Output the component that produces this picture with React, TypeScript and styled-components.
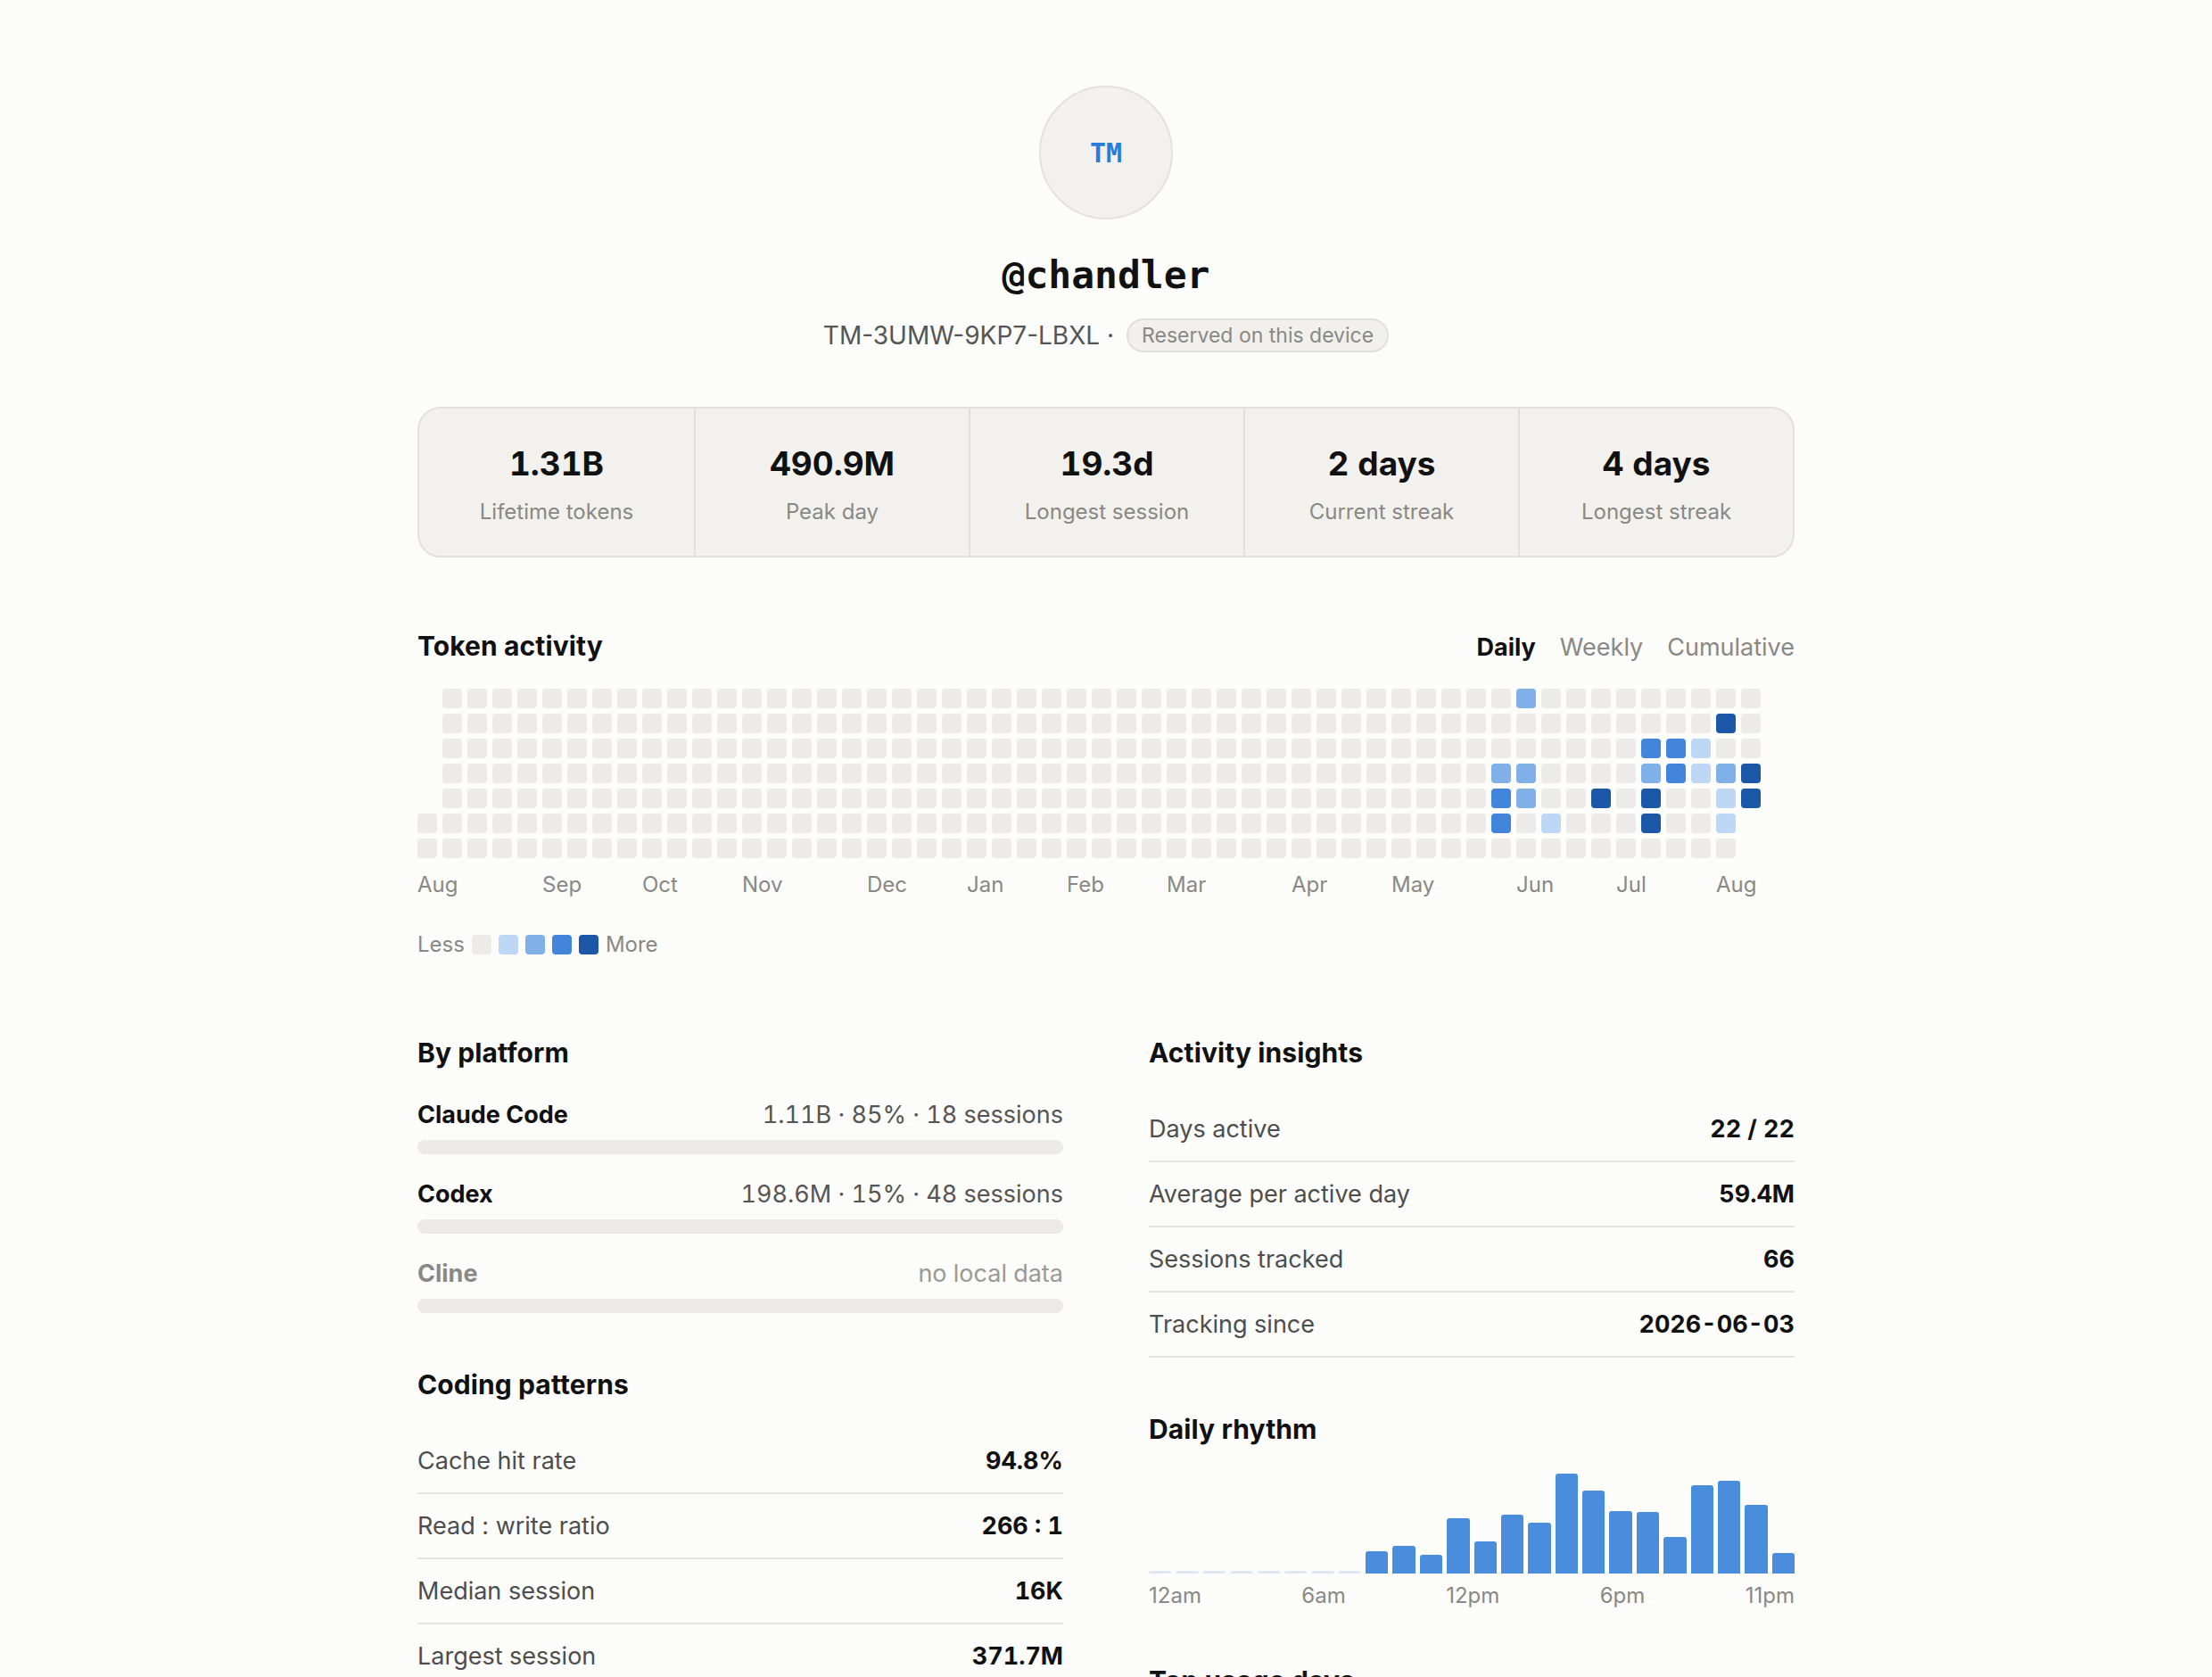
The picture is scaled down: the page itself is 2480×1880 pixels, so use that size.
import * as React from 'react';
import styled, { createGlobalStyle } from 'styled-components';

const GlobalStyle = createGlobalStyle`
  html, body {
    margin: 0;
    padding: 0;
    background: #fcfcfb;
  }
  body {
    font-family: Inter, "Noto Sans", "Liberation Sans", sans-serif;
    color: #111;
    -webkit-font-smoothing: antialiased;
  }
  * {
    box-sizing: border-box;
  }
`;

const LEVELS = ['#ecebe7', '#bdd7f4', '#80b0e8', '#4285db', '#1c58a7'];

// active cells, keyed by "column,row"
const ACTIVE: Record<string, number> = {
  '44,0': 2,
  '52,1': 4,
  '49,2': 3,
  '50,2': 3,
  '51,2': 1,
  '43,3': 2,
  '44,3': 2,
  '49,3': 2,
  '50,3': 3,
  '51,3': 1,
  '52,3': 2,
  '53,3': 4,
  '43,4': 3,
  '44,4': 2,
  '47,4': 4,
  '49,4': 4,
  '52,4': 1,
  '53,4': 4,
  '43,5': 3,
  '45,5': 1,
  '49,5': 4,
  '52,5': 1,
};

const MONTHS = [
  { name: 'Aug', col: 0 },
  { name: 'Sep', col: 5 },
  { name: 'Oct', col: 9 },
  { name: 'Nov', col: 13 },
  { name: 'Dec', col: 18 },
  { name: 'Jan', col: 22 },
  { name: 'Feb', col: 26 },
  { name: 'Mar', col: 30 },
  { name: 'Apr', col: 35 },
  { name: 'May', col: 39 },
  { name: 'Jun', col: 44 },
  { name: 'Jul', col: 48 },
  { name: 'Aug', col: 52 },
];

const HOURS = [0, 0, 0, 0, 0, 0, 0, 0, 25, 31, 21, 62, 36, 66, 57, 112, 93, 70, 69, 41, 99, 104, 77, 23];

const STATS = [
  { value: '1.31B', label: 'Lifetime tokens' },
  { value: '490.9M', label: 'Peak day' },
  { value: '19.3d', label: 'Longest session' },
  { value: '2 days', label: 'Current streak' },
  { value: '4 days', label: 'Longest streak' },
];

const PLATFORMS = [
  { name: 'Claude Code', meta: '1.11B · 85% · 18 sessions' },
  { name: 'Codex', meta: '198.6M · 15% · 48 sessions' },
  { name: 'Cline', meta: 'no local data', muted: true },
];

const INSIGHTS = [
  { label: 'Days active', value: '22 / 22' },
  { label: 'Average per active day', value: '59.4M' },
  { label: 'Sessions tracked', value: '66' },
  { label: 'Tracking since', value: '2026-06-03' },
];

const PATTERNS = [
  { label: 'Cache hit rate', value: '94.8%' },
  { label: 'Read : write ratio', value: '266 : 1' },
  { label: 'Median session', value: '16K' },
  { label: 'Largest session', value: '371.7M' },
];

const Page = styled('main')`
  width: 1544px;
  margin: 0 auto;
  padding: 96px 0 160px;
  display: flex;
  flex-direction: column;
`;

const ProfileHeader = styled('header')`
  display: flex;
  flex-direction: column;
  align-items: center;
`;

const Avatar = styled('div')`
  width: 150px;
  height: 150px;
  border-radius: 50%;
  background: #f2f1ee;
  border: 2px solid #e4e2dd;
  display: flex;
  align-items: center;
  justify-content: center;
  font-family: "DejaVu Sans Mono", "Liberation Mono", monospace;
  font-weight: 700;
  font-size: 30px;
  color: #2b7bdc;
`;

const Handle = styled('h1')`
  margin: 36px 0 0;
  font-family: "DejaVu Sans Mono", "Liberation Mono", monospace;
  font-size: 43px;
  line-height: 52px;
  font-weight: 700;
  color: #111;
`;

const IdRow = styled('div')`
  margin-top: 23px;
  height: 38px;
  display: flex;
  align-items: center;
  gap: 14px;
  font-size: 28px;
  color: #555;
`;

const Pill = styled('span')`
  height: 38px;
  padding: 0 15px;
  border-radius: 19px;
  background: #f1f0ed;
  border: 2px solid #e2e0db;
  color: #8a8884;
  font-size: 23px;
  display: inline-flex;
  align-items: center;
`;

const StatsCard = styled('section')`
  margin-top: 61px;
  display: grid;
  grid-template-columns: repeat(5, 1fr);
  background: #f2f1ee;
  border: 2px solid #e3e1dc;
  border-radius: 26px;
  overflow: hidden;
`;

const Stat = styled('div')`
  padding: 40px 0 34px;
  display: flex;
  flex-direction: column;
  align-items: center;
  gap: 17px;

  & + & {
    border-left: 2px solid #e3e1dc;
  }
`;

const StatValue = styled('div')`
  font-size: 37px;
  line-height: 44px;
  font-weight: 700;
  font-variant-numeric: tabular-nums;
  color: #111;
`;

const StatLabel = styled('div')`
  font-size: 24px;
  line-height: 30px;
  color: #8a8884;
`;

const ActivitySection = styled('section')`
  margin-top: 81px;
`;

const SectionHeader = styled('div')`
  display: flex;
  justify-content: space-between;
  align-items: baseline;
`;

const Title = styled('h2')`
  margin: 0;
  font-size: 30px;
  line-height: 36px;
  font-weight: 700;
  letter-spacing: 0.1px;
  color: #111;
`;

const Tabs = styled('div')`
  display: flex;
  gap: 27px;
`;

const Tab = styled('button')<{ $active?: boolean }>`
  padding: 0;
  border: 0;
  background: none;
  font-family: inherit;
  font-size: 27px;
  line-height: 34px;
  font-weight: ${p => (p.$active ? 700 : 400)};
  color: ${p => (p.$active ? '#111' : '#8a8884')};
  cursor: pointer;
`;

const HeatGrid = styled('div')`
  margin-top: 29px;
  display: grid;
  grid-template-rows: repeat(7, 22px);
  grid-auto-flow: column;
  grid-auto-columns: 22px;
  gap: 6px;
`;

const Cell = styled('div')<{ $level: number; $blank?: boolean }>`
  border-radius: 4px;
  background: ${p => (p.$blank ? 'transparent' : LEVELS[p.$level])};
`;

const MonthRow = styled('div')`
  margin-top: 15px;
  display: grid;
  grid-template-columns: repeat(54, 22px);
  column-gap: 6px;
  font-size: 24px;
  line-height: 30px;
  color: #8a8884;
`;

const Month = styled('span')<{ $col: number }>`
  grid-row: 1;
  grid-column: ${p => p.$col + 1} / span 3;
  white-space: nowrap;
`;

const Legend = styled('div')`
  margin-top: 37px;
  display: flex;
  align-items: center;
  gap: 8px;
  font-size: 24px;
  line-height: 30px;
  color: #8a8884;
`;

const Swatch = styled('span')<{ $level: number }>`
  width: 22px;
  height: 22px;
  border-radius: 4px;
  background: ${p => LEVELS[p.$level]};
`;

const Columns = styled('div')`
  margin-top: 88px;
  display: grid;
  grid-template-columns: 1fr 1fr;
  column-gap: 96px;
  align-items: start;
`;

const Column = styled('div')`
  display: flex;
  flex-direction: column;
  gap: 62px;
`;

const Block = styled('section')`
  display: flex;
  flex-direction: column;
`;

const PlatformList = styled('div')`
  margin-top: 35px;
  display: flex;
  flex-direction: column;
  gap: 28px;
`;

const PlatformRow = styled('div')`
  display: flex;
  flex-direction: column;
  gap: 11px;
`;

const PlatformLine = styled('div')`
  display: flex;
  justify-content: space-between;
  font-size: 27px;
  line-height: 34px;
`;

const PlatformName = styled('span')<{ $muted?: boolean }>`
  font-weight: 700;
  color: ${p => (p.$muted ? '#8a8884' : '#111')};
`;

const PlatformMeta = styled('span')<{ $muted?: boolean }>`
  font-variant-numeric: tabular-nums;
  color: ${p => (p.$muted ? '#9b9994' : '#555')};
`;

const Track = styled('div')`
  height: 16px;
  border-radius: 8px;
  background: #ebeae6;
`;

const InfoList = styled('div')`
  margin-top: 32px;
  display: flex;
  flex-direction: column;
`;

const InfoRow = styled('div')`
  display: flex;
  justify-content: space-between;
  padding: 19px 0 18px;
  border-bottom: 2px solid #e6e4df;
  font-size: 27px;
  line-height: 34px;
`;

const InfoLabel = styled('span')`
  color: #4d4d4d;
`;

const InfoValue = styled('span')`
  font-weight: 700;
  font-variant-numeric: tabular-nums;
  color: #111;
`;

const Chart = styled('div')`
  margin-top: 32px;
  height: 112px;
  display: grid;
  grid-template-columns: repeat(24, 1fr);
  column-gap: 5px;
  align-items: end;
`;

const Bar = styled('div')<{ $empty?: boolean }>`
  background: ${p => (p.$empty ? '#dde7f5' : '#4a8ddc')};
  border-radius: 3px 3px 0 0;
`;

const Axis = styled('div')`
  margin-top: 10px;
  display: flex;
  justify-content: space-between;
  font-size: 24px;
  line-height: 30px;
  color: #8a8884;
`;

const buildCells = () => {
  const cells: { key: string; level: number; blank: boolean }[] = [];
  for (let i = 0; i < 5; i++) cells.push({ key: `b${i}`, level: 0, blank: true });
  for (let i = 5; i < 376; i++) {
    const col = Math.floor(i / 7);
    const row = i % 7;
    cells.push({ key: `d${i}`, level: ACTIVE[`${col},${row}`] || 0, blank: false });
  }
  return cells;
};

const App = () => {
  const cells = buildCells();
  return (
    <>
      <GlobalStyle />
      <Page>
        <ProfileHeader>
          <Avatar>TM</Avatar>
          <Handle>@chandler</Handle>
          <IdRow>
            <span>TM-3UMW-9KP7-LBXL ·</span>
            <Pill>Reserved on this device</Pill>
          </IdRow>
        </ProfileHeader>

        <StatsCard>
          {STATS.map(stat => (
            <Stat key={stat.label}>
              <StatValue>{stat.value}</StatValue>
              <StatLabel>{stat.label}</StatLabel>
            </Stat>
          ))}
        </StatsCard>

        <ActivitySection>
          <SectionHeader>
            <Title>Token activity</Title>
            <Tabs>
              <Tab $active>Daily</Tab>
              <Tab>Weekly</Tab>
              <Tab>Cumulative</Tab>
            </Tabs>
          </SectionHeader>
          <HeatGrid>
            {cells.map(cell => (
              <Cell key={cell.key} $level={cell.level} $blank={cell.blank} />
            ))}
          </HeatGrid>
          <MonthRow>
            {MONTHS.map(month => (
              <Month key={`${month.name}${month.col}`} $col={month.col}>
                {month.name}
              </Month>
            ))}
          </MonthRow>
          <Legend>
            <span>Less</span>
            {[0, 1, 2, 3, 4].map(level => (
              <Swatch key={level} $level={level} />
            ))}
            <span>More</span>
          </Legend>
        </ActivitySection>

        <Columns>
          <Column>
            <Block>
              <Title>By platform</Title>
              <PlatformList>
                {PLATFORMS.map(platform => (
                  <PlatformRow key={platform.name}>
                    <PlatformLine>
                      <PlatformName $muted={platform.muted}>{platform.name}</PlatformName>
                      <PlatformMeta $muted={platform.muted}>{platform.meta}</PlatformMeta>
                    </PlatformLine>
                    <Track />
                  </PlatformRow>
                ))}
              </PlatformList>
            </Block>
            <Block>
              <Title>Coding patterns</Title>
              <InfoList>
                {PATTERNS.map(item => (
                  <InfoRow key={item.label}>
                    <InfoLabel>{item.label}</InfoLabel>
                    <InfoValue>{item.value}</InfoValue>
                  </InfoRow>
                ))}
              </InfoList>
            </Block>
          </Column>

          <Column>
            <Block>
              <Title>Activity insights</Title>
              <InfoList>
                {INSIGHTS.map(item => (
                  <InfoRow key={item.label}>
                    <InfoLabel>{item.label}</InfoLabel>
                    <InfoValue>{item.value}</InfoValue>
                  </InfoRow>
                ))}
              </InfoList>
            </Block>
            <Block>
              <Title>Daily rhythm</Title>
              <Chart>
                {HOURS.map((h, i) => (
                  <Bar key={i} $empty={h === 0} style={{ height: h === 0 ? 3 : h }} />
                ))}
              </Chart>
              <Axis>
                <span>12am</span>
                <span>6am</span>
                <span>12pm</span>
                <span>6pm</span>
                <span>11pm</span>
              </Axis>
            </Block>
            <Block>
              <Title>Top usage days</Title>
            </Block>
          </Column>
        </Columns>
      </Page>
    </>
  );
};

export default App;
